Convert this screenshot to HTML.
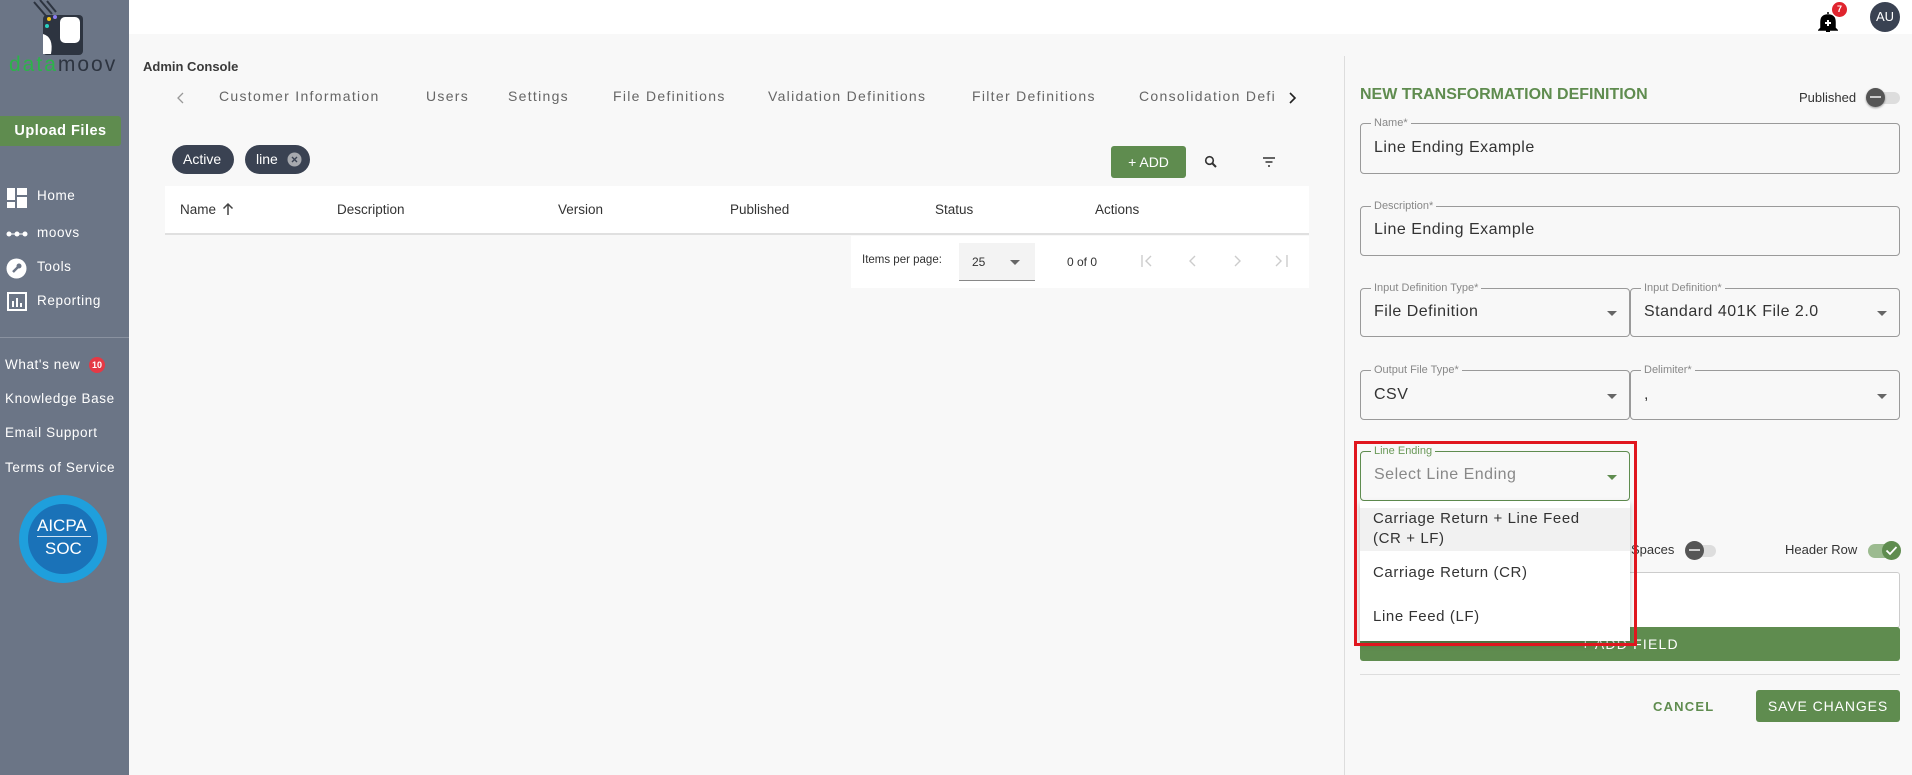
<!DOCTYPE html>
<html><head><meta charset="utf-8"><style>
*{box-sizing:border-box;margin:0;padding:0}
body{width:1912px;height:775px;overflow:hidden;font-family:"Liberation Sans",sans-serif;background:#f8f8f8;position:relative;color:#333}
.a{position:absolute;white-space:nowrap}
#side{left:0;top:0;width:129px;height:775px;background:#6b7586}
#top{left:129px;top:0;width:1783px;height:34px;background:#fff}
.nav{color:#fff;font-size:13.5px;letter-spacing:.6px}
.tab{top:88px;font-size:14px;color:#666;letter-spacing:1.3px}
.chip{height:29px;top:145px;border-radius:15px;background:#3a4252;color:#fff;font-size:14px;line-height:29px;padding:0 11px}
.th{font-size:13.5px;color:#333}
.fld{border:1px solid #9a9a9a;border-radius:4px;background:#f8f8f8}
.lbl{font-size:11px;color:#888;background:#f8f8f8;padding:0 3px;top:-7px;left:10px;position:absolute}
.val{position:absolute;left:13px;font-size:16px;color:#333;letter-spacing:.5px}
.arr{position:absolute;right:12px;width:0;height:0;border-left:5px solid transparent;border-right:5px solid transparent;border-top:5px solid #666}
.mi{position:absolute;left:13px;font-size:15px;color:#333;letter-spacing:.6px}
</style></head><body>
<div class="a" id="side"></div>
<div class="a" id="top"></div>
<!-- logo -->
<svg class="a" style="left:30px;top:0" width="60" height="56"><g stroke="#2d3440" stroke-width="2"><line x1="4" y1="2" x2="16" y2="16"/><line x1="10" y1="0" x2="22" y2="14"/><line x1="17" y1="1" x2="26" y2="12"/></g><rect x="13" y="15" width="40" height="40" rx="4" fill="#2d3440"/><rect x="30" y="17" width="20" height="26" rx="5" fill="#fff"/><path d="M13 34 Q24 37 21 54 L13 54Z" fill="#fff"/><circle cx="19" cy="19" r="2" fill="#f5c518"/><circle cx="25" cy="17" r="2" fill="#8a7cf0"/><circle cx="17" cy="26" r="2" fill="#2ad0c0"/></svg>
<div class="a" style="left:9px;top:53px;font-size:21px;letter-spacing:2px"><span style="color:#2cb34a">data</span><span style="color:#2d3440">moov</span></div>
<div class="a" style="left:0;top:116px;width:121px;height:30px;background:#5f8c4f;color:#fff;font-weight:bold;font-size:14.5px;line-height:30px;text-align:center;border-radius:0 3px 3px 0;letter-spacing:.5px">Upload Files</div>
<svg class="a" style="left:7px;top:188px" width="20" height="20"><rect x="0" y="0" width="8" height="12" fill="#fff"/><rect x="10" y="0" width="10" height="7" fill="#fff"/><rect x="10" y="9" width="10" height="11" fill="#fff"/><rect x="0" y="14" width="8" height="6" fill="#fff"/></svg>
<div class="a nav" style="left:37px;top:188px">Home</div>
<svg class="a" style="left:6px;top:230px" width="22" height="8"><circle cx="3" cy="4" r="2.5" fill="#fff"/><circle cx="11" cy="4" r="2.5" fill="#fff"/><circle cx="19" cy="4" r="2.5" fill="#fff"/><line x1="3" y1="4" x2="19" y2="4" stroke="#fff"/></svg>
<div class="a nav" style="left:37px;top:225px">moovs</div>
<svg class="a" style="left:6px;top:258px" width="21" height="21"><circle cx="10.5" cy="10.5" r="10" fill="#fff"/><path d="M7 14 L12 9" stroke="#6b7586" stroke-width="2.5"/><circle cx="13" cy="8" r="2.5" fill="#6b7586"/></svg>
<div class="a nav" style="left:37px;top:259px">Tools</div>
<svg class="a" style="left:7px;top:292px" width="20" height="19"><rect x="1" y="1" width="18" height="17" fill="none" stroke="#fff" stroke-width="2"/><rect x="5" y="9" width="2" height="6" fill="#fff"/><rect x="9" y="6" width="2" height="9" fill="#fff"/><rect x="13" y="11" width="2" height="4" fill="#fff"/></svg>
<div class="a nav" style="left:37px;top:293px">Reporting</div>
<div class="a" style="left:0;top:337px;width:129px;height:1px;background:#8a92a0"></div>
<div class="a nav" style="left:5px;top:357px">What's new</div>
<div class="a" style="left:89px;top:357px;width:16px;height:16px;border-radius:8px;background:#e53945;color:#fff;font-size:9px;font-weight:bold;line-height:16px;text-align:center">10</div>
<div class="a nav" style="left:5px;top:391px">Knowledge Base</div>
<div class="a nav" style="left:5px;top:425px">Email Support</div>
<div class="a nav" style="left:5px;top:460px">Terms of Service</div>
<div class="a" style="left:19px;top:495px;width:88px;height:88px;border-radius:50%;background:#1f9fdc"></div>
<div class="a" style="left:28px;top:504px;width:70px;height:70px;border-radius:50%;background:#1a72b8"></div>
<div class="a" style="left:37px;top:516px;color:#fff;font-size:17px">AICPA</div>
<div class="a" style="left:37px;top:536px;width:54px;height:1px;background:#cfe4f5"></div>
<div class="a" style="left:45px;top:539px;color:#fff;font-size:17px">SOC</div>

<!-- top right -->
<svg class="a" style="left:1818px;top:11px" width="20" height="22"><path d="M10 1 L10 3 M3 17 L3 11 Q3 4 10 4 Q17 4 17 11 L17 17 L19 19 L1 19 Z" fill="#000" stroke="#000" stroke-width="1.5"/><path d="M10 9v6M7 12h6" stroke="#fff" stroke-width="2"/><rect x="8" y="19" width="4" height="2" fill="#000"/></svg>
<div class="a" style="left:1832px;top:2px;width:15px;height:15px;border-radius:8px;background:#e0242e;color:#fff;font-size:9px;font-weight:bold;text-align:center;line-height:15px">7</div>
<div class="a" style="left:1870px;top:2px;width:30px;height:30px;border-radius:15px;background:#3a4252;color:#fff;font-size:13px;line-height:30px;text-align:center">AU</div>

<!-- main -->
<div class="a" style="left:143px;top:59px;font-size:13px;font-weight:bold;color:#3a3a3a">Admin Console</div>
<svg class="a" style="left:176px;top:91px" width="10" height="14"><path d="M7 2 L2 7 L7 12" fill="none" stroke="#999" stroke-width="1.3"/></svg>
<div class="a tab" style="left:219px">Customer Information</div>
<div class="a tab" style="left:426px">Users</div>
<div class="a tab" style="left:508px">Settings</div>
<div class="a tab" style="left:613px">File Definitions</div>
<div class="a tab" style="left:768px">Validation Definitions</div>
<div class="a tab" style="left:972px">Filter Definitions</div>
<div class="a tab" style="left:1139px">Consolidation Defi</div>
<svg class="a" style="left:1287px;top:91px" width="10" height="14"><path d="M3 2 L8 7 L3 12" fill="none" stroke="#222" stroke-width="1.6"/></svg>
<div class="a chip" style="left:172px;width:62px">Active</div>
<div class="a chip" style="left:245px;width:65px">line</div>
<svg class="a" style="left:287px;top:152px" width="15" height="15"><circle cx="7.5" cy="7.5" r="7" fill="#a7a9ae"/><path d="M5 5l5 5M10 5l-5 5" stroke="#3a4252" stroke-width="1.4"/></svg>
<div class="a" style="left:1111px;top:146px;width:75px;height:32px;background:#5f8c4f;border-radius:3px;color:#fff;font-size:14px;line-height:32px;text-align:center">+ ADD</div>
<svg class="a" style="left:1204px;top:155px" width="14" height="14"><circle cx="5.5" cy="5.5" r="3.8" fill="none" stroke="#333" stroke-width="1.6"/><path d="M8 8l4 4" stroke="#333" stroke-width="2"/></svg>
<svg class="a" style="left:1262px;top:156px" width="14" height="12"><path d="M1 2h12M3.5 6h7M6 10h2" stroke="#333" stroke-width="1.6"/></svg>
<div class="a" style="left:165px;top:186px;width:1144px;height:49px;background:#fff;border-bottom:2px solid #e0e0e0"></div>
<div class="a th" style="left:180px;top:202px">Name</div>
<svg class="a" style="left:222px;top:202px" width="12" height="14"><path d="M6 13V2M1.5 6.5L6 2l4.5 4.5" fill="none" stroke="#444" stroke-width="1.5"/></svg>
<div class="a th" style="left:337px;top:202px">Description</div>
<div class="a th" style="left:558px;top:202px">Version</div>
<div class="a th" style="left:730px;top:202px">Published</div>
<div class="a th" style="left:935px;top:202px">Status</div>
<div class="a th" style="left:1095px;top:202px">Actions</div>
<div class="a" style="left:851px;top:236px;width:458px;height:52px;background:#fff"></div>
<div class="a" style="left:862px;top:254px;font-size:11.5px;color:#333">Items per page:</div>
<div class="a" style="left:959px;top:243px;width:76px;height:38px;background:#f3f3f3;border-bottom:1px solid #888"></div>
<div class="a" style="left:972px;top:255px;font-size:12px;color:#333">25</div>
<div class="a arr" style="left:1010px;top:260px;border-top-color:#666"></div>
<div class="a" style="left:1067px;top:255px;font-size:12px;color:#333">0 of 0</div>
<svg class="a" style="left:1140px;top:254px" width="150" height="14" fill="none" stroke="#ccc" stroke-width="1.4"><path d="M2 1v12M11 2L6 7l5 5"/><path d="M55 2L50 7l5 5"/><path d="M95 2l5 5-5 5"/><path d="M136 2l5 5-5 5M147 1v12"/></svg>
<div class="a" style="left:1344px;top:56px;width:1px;height:719px;background:#ddd"></div>

<!-- right panel -->
<div class="a" style="left:1360px;top:86px;font-size:16px;font-weight:bold;color:#5f8c4f">NEW TRANSFORMATION DEFINITION</div>
<div class="a" style="left:1799px;top:90px;font-size:13px;color:#333">Published</div>
<div class="a" style="left:1868px;top:92px;width:32px;height:12px;border-radius:6px;background:#ddd"></div>
<div class="a" style="left:1866px;top:88px;width:19px;height:19px;border-radius:10px;background:#555;box-shadow:0 1px 2px rgba(0,0,0,.4)"></div>
<div class="a" style="left:1870px;top:96px;width:11px;height:2px;background:#ccc"></div>

<div class="a fld" style="left:1360px;top:123px;width:540px;height:51px"><span class="lbl">Name*</span><span class="val" style="top:15px">Line Ending Example</span></div>
<div class="a fld" style="left:1360px;top:206px;width:540px;height:50px"><span class="lbl">Description*</span><span class="val" style="top:14px">Line Ending Example</span></div>
<div class="a fld" style="left:1360px;top:288px;width:270px;height:49px"><span class="lbl">Input Definition Type*</span><span class="val" style="top:14px">File Definition</span><span class="arr" style="top:22px"></span></div>
<div class="a fld" style="left:1630px;top:288px;width:270px;height:49px"><span class="lbl">Input Definition*</span><span class="val" style="top:14px">Standard 401K File 2.0</span><span class="arr" style="top:22px"></span></div>
<div class="a fld" style="left:1360px;top:370px;width:270px;height:50px"><span class="lbl">Output File Type*</span><span class="val" style="top:15px">CSV</span><span class="arr" style="top:23px"></span></div>
<div class="a fld" style="left:1630px;top:370px;width:270px;height:50px"><span class="lbl">Delimiter*</span><span class="val" style="top:15px">,</span><span class="arr" style="top:23px"></span></div>

<div class="a" style="left:1631px;top:542px;font-size:13px;color:#333">Spaces</div>
<div class="a" style="left:1690px;top:545px;width:26px;height:12px;border-radius:6px;background:#ddd"></div>
<div class="a" style="left:1685px;top:541px;width:19px;height:19px;border-radius:10px;background:#555"></div>
<div class="a" style="left:1689px;top:549px;width:11px;height:2px;background:#ccc"></div>
<div class="a" style="left:1785px;top:542px;font-size:13px;color:#333">Header Row</div>
<div class="a" style="left:1868px;top:544px;width:30px;height:14px;border-radius:7px;background:#9cbb90"></div>
<div class="a" style="left:1882px;top:541px;width:19px;height:19px;border-radius:10px;background:#5f8c4f"></div>
<svg class="a" style="left:1885px;top:545px" width="13" height="11"><path d="M1.5 5.5l3.5 3.5 6.5-7" fill="none" stroke="#fff" stroke-width="1.8"/></svg>
<div class="a" style="left:1360px;top:572px;width:540px;height:56px;background:#fff;border:1px solid #ccc;border-radius:3px"></div>
<div class="a" style="left:1360px;top:627px;width:540px;height:34px;background:#5f8c4f;border-radius:3px;color:#fff;font-size:14px;line-height:34px;text-align:center;letter-spacing:1.2px">+ ADD FIELD</div>
<div class="a" style="left:1360px;top:674px;width:540px;height:1px;background:#ddd"></div>
<div class="a" style="left:1653px;top:699px;font-size:13px;font-weight:bold;color:#5f8c4f;letter-spacing:1.2px">CANCEL</div>
<div class="a" style="left:1756px;top:690px;width:144px;height:32px;background:#5f8c4f;border-radius:3px;color:#fff;font-size:14px;line-height:32px;text-align:center;letter-spacing:.9px">SAVE CHANGES</div>

<!-- line ending dropdown -->
<div class="a fld" style="left:1360px;top:451px;width:270px;height:50px;border-color:#5f8c4f"><span class="lbl" style="color:#6b9a5a">Line Ending</span><span class="val" style="top:14px;color:#888">Select Line Ending</span><span class="arr" style="top:23px;border-top-color:#5f8c4f"></span></div>
<div class="a" style="left:1360px;top:501px;width:270px;height:140px;background:#fff;box-shadow:0 3px 6px rgba(0,0,0,.25)">
 <div style="position:absolute;left:0;top:7px;width:270px;height:43px;background:#f1f1f1"></div>
 <span class="mi" style="top:9px">Carriage Return + Line Feed</span>
 <span class="mi" style="top:29px">(CR + LF)</span>
 <span class="mi" style="top:63px">Carriage Return (CR)</span>
 <span class="mi" style="top:107px">Line Feed (LF)</span>
</div>
<div class="a" style="left:1354px;top:441px;width:283px;height:205px;border:3px solid #e0161e"></div>
</body></html>
